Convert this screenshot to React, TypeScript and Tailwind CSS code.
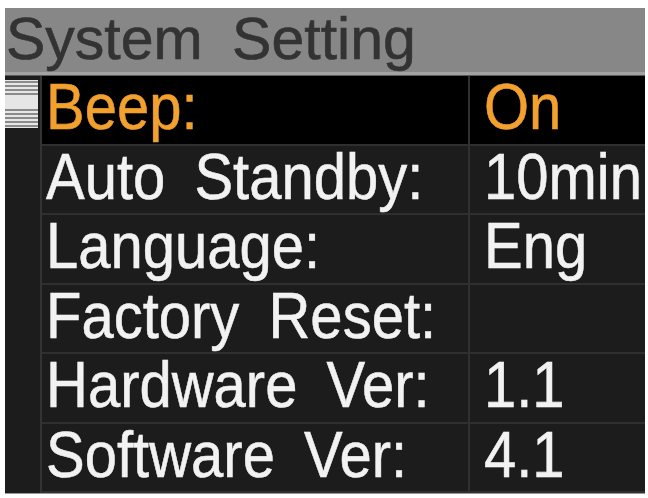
import React from 'react';

const rows = [
  { label: 'Beep:', value: 'On', active: true },
  { label: 'Auto Standby:', value: '10min' },
  { label: 'Language:', value: 'Eng' },
  { label: 'Factory Reset:', value: '' },
  { label: 'Hardware Ver:', value: '1.1' },
  { label: 'Software Ver:', value: '4.1' },
];

const ScrollThumb = () => (
  <div className="mt-[4px] w-[33px] h-[48px] bg-[#e6e6e6] flex flex-col">
    {/* top grip */}
    <div className="flex flex-col gap-[2px] pt-[1px]">
      <div className="h-[2px] bg-[#8a8a8a]" />
      <div className="h-[2px] bg-[#8a8a8a]" />
      <div className="h-[2px] bg-[#8a8a8a]" />
      <div className="h-[2px] bg-[#8a8a8a]" />
    </div>
    <div className="flex-1" />
    {/* bottom grip */}
    <div className="flex flex-col gap-[2px] pb-[1px]">
      <div className="h-[2px] bg-[#8a8a8a]" />
      <div className="h-[2px] bg-[#8a8a8a]" />
      <div className="h-[2px] bg-[#8a8a8a]" />
      <div className="h-[2px] bg-[#8a8a8a]" />
      <div className="h-[2px] bg-[#8a8a8a]" />
    </div>
  </div>
);

export default function App() {
  return (
    <div className="w-[648px] h-[498px] bg-white overflow-hidden font-['Liberation_Sans',Arial,sans-serif]">
      <div className="ml-[5px] mt-[8px] w-[640px] h-[486px] flex flex-col bg-[#1c1c1c] border-b border-[#9a9a9a]">
        {/* Title bar */}
        <div className="h-[64px] bg-[#878787] flex items-start pl-[1px]">
          <span className="inline-block text-[59px] leading-[56px] text-[#333333] [word-spacing:13px] mt-[3px] [-webkit-text-stroke:0.6px_#333333]">
            System Setting
          </span>
        </div>
        <div className="h-[4px] bg-[#a2a2a2] border-b border-[#5a5a5a]" />

        <div className="flex flex-1">
          {/* scroll bar */}
          <div className="w-[37px] border-r-2 border-[#333333] bg-[#1c1c1c]">
            <ScrollThumb />
          </div>

          {/* menu list */}
          <div className="flex-1 flex flex-col">
            {rows.map((row) => (
              <div
                key={row.label}
                className={`h-[69.5px] flex border-b-2 border-[#2f2f2f] ${
                  row.active ? 'bg-black text-[#f2a02e]' : 'bg-[#1c1c1c] text-[#f2f2f2]'
                }`}
              >
                <div className="w-[428px] flex items-center pl-[4px] border-r-2 border-[#303030]">
                  <span className="inline-block text-[58px] leading-none [word-spacing:13px] scale-y-[1.12] -mt-[5px] whitespace-nowrap [-webkit-text-stroke:0.5px_currentColor]">
                    {row.label}
                  </span>
                </div>
                <div className="flex-1 flex items-center pl-[14px]">
                  <span className="inline-block text-[58px] leading-none scale-y-[1.12] -mt-[5px] whitespace-nowrap [-webkit-text-stroke:0.5px_currentColor]">
                    {row.value}
                  </span>
                </div>
              </div>
            ))}
          </div>
        </div>
      </div>
    </div>
  );
}
